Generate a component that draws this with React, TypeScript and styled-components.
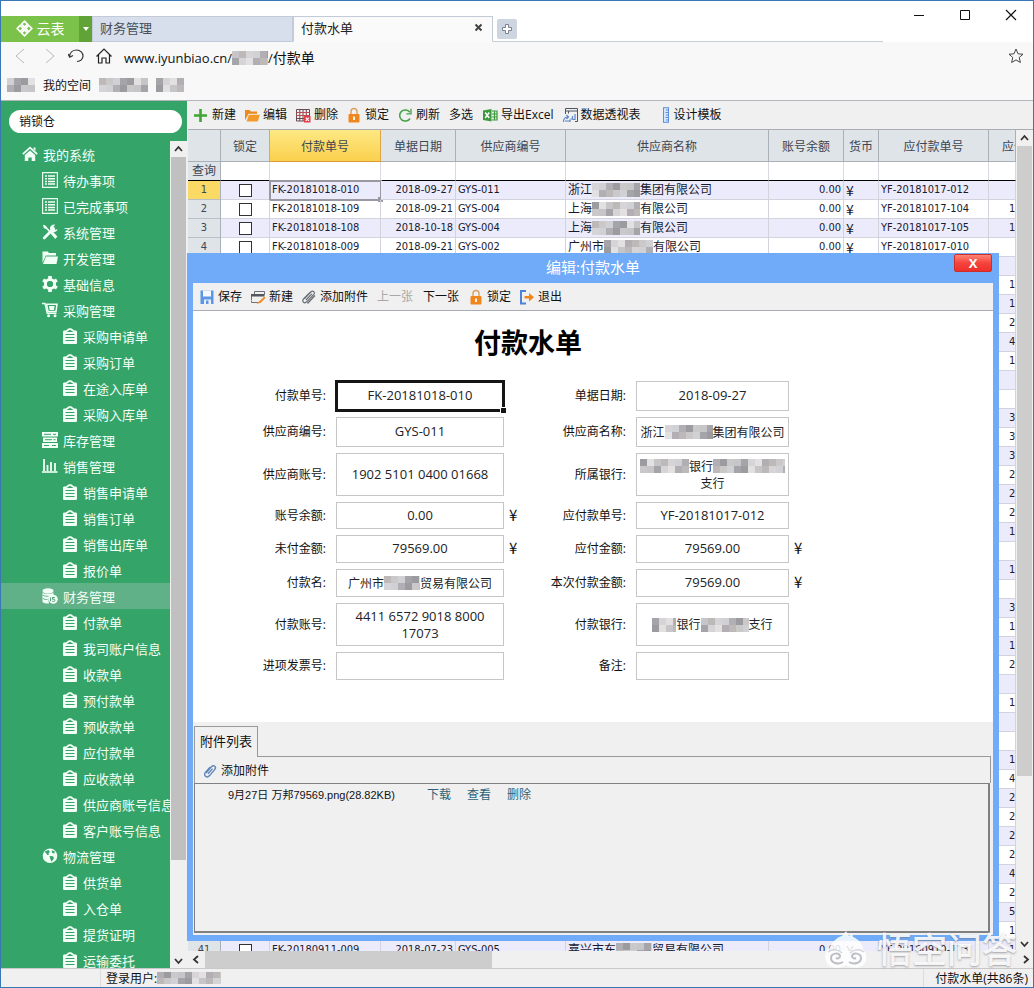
import React from "react";
import styled, { createGlobalStyle, css } from "styled-components";

const GlobalStyle = createGlobalStyle`
  * { box-sizing: border-box; }
  body { margin: 0; background: #fff; }
  body, button, input, textarea, table {
    font-family: "Open Sans", "Noto Sans CJK SC", sans-serif;
    font-size: 12px;
    color: #111;
  }
  button { border: 0; padding: 0; background: none; cursor: pointer; }
  a { text-decoration: none; color: inherit; }
`;

/* ---------- icons ---------- */

const IconSvg = styled.svg`
  flex: none;
`;
const Icon = ({ children }: { children: React.ReactNode }) => (
  <IconSvg width="16" height="16" viewBox="0 0 16 16" fill="none" aria-hidden="true">
    {children}
  </IconSvg>
);

const icons = {
  home: (
    <Icon>
      <path d="M0.8 8.2 8 1.6l7.2 6.6" stroke="#f2fff6" strokeWidth="1.8" />
      <path d="M11.5 1.5h2v3.4l-2-1.8z" fill="#f2fff6" />
      <path d="M2.8 9 8 4.4 13.2 9v6H9.7v-3.6H6.3V15H2.8z" fill="#f2fff6" />
    </Icon>
  ),
  list: (
    <Icon>
      <path d="M.6.6h14.8v14.800H.6z" stroke="#e9fff1" strokeWidth="1.200" />
      <path d="M3 4h2M6 4h7M3 6.7h2M6 6.7h7M3 9.4h2M6 9.4h7M3 12h2M6 12h7" stroke="#f2fff6" strokeWidth="1.5" />
    </Icon>
  ),
  tools: (
    <Icon>
      <path d="M2 1.5 13.6 13.6" stroke="#f2fff6" strokeWidth="1.7" />
      <path d="M1 .8l3 1.2.8 2-1 1-2-1z" fill="#f2fff6" />
      <path d="M9 9.2l1.8-1.6 4.6 4.8-2.2 2.6z" fill="#f2fff6" />
      <path d="M2.2 14 11.6 4.6" stroke="#f2fff6" strokeWidth="2.8" strokeLinecap="round" />
      <path d="M13.2.8a3.8 3.8 0 1 0 2.3 4.4l-2.5.5-1.5-1.4.2-1.8z" fill="#f2fff6" />
    </Icon>
  ),
  folder: (
    <Icon>
      <path d="M.5 13V1.500h5.200l1.300 1.500H14v2.500H3.800z" fill="#f2fff6" />
      <path d="M4 6.500H16l-1.500 7.500H1z" fill="#f2fff6" />
    </Icon>
  ),
  gear: (
    <Icon>
      <circle cx="8" cy="8" r="4.6" stroke="#f2fff6" strokeWidth="3" />
      <path d="M8 0v3M8 13v3M1.1 4l2.6 1.5M12.3 10.5l2.6 1.5M1.1 12l2.6-1.5M12.3 5.5 14.9 4" stroke="#f2fff6" strokeWidth="3.6" />
      <circle cx="8" cy="8" r="2.8" fill="#35a469" />
    </Icon>
  ),
  cart: (
    <Icon>
      <path d="M0 1.5h3l2.2 9.8h9.3" stroke="#f2fff6" strokeWidth="1.4" />
      <path d="M4.6 2.2H15l-1 7.4H6z" stroke="#f2fff6" strokeWidth="1.5" />
      <path d="M7 4h5.6l-.7 4H7.6z" fill="#f2fff6" />
      <circle cx="6.6" cy="13.8" r="1.5" fill="#f2fff6" />
      <circle cx="13" cy="13.8" r="1.5" fill="#f2fff6" />
    </Icon>
  ),
  clipboard: (
    <Icon>
      <path d="M1 4C1 3 1.500 2.500 2.500 2.500h1.300L6.800.2h2.400L12.200 2.500h1.300C14.500 2.500 15 3 15 4V14.500c0 1-.5 1.500-1.500 1.500h-11C1.500 16 1 15.500 1 14.500z" fill="#f2fff6" />
      <path d="M4.500 4h7L8 1.800z" fill="#35a469" />
      <path d="M3.500 6.500h9M3.500 9.500h9M3.500 12.500h9" stroke="#35a469" strokeWidth="1.100" />
    </Icon>
  ),
  stock: (
    <Icon>
      <path d="M0 0h16v4.500H0zM1 5.600h14v4.300H1zM0 11h16v5H0z" fill="#f2fff6" />
      <path d="M2 2.300h7M11 2.300h3M3 7.700h7M11.500 7.700h2M2 13.500h5M10 13.500h4" stroke="#35a469" strokeWidth="1" />
    </Icon>
  ),
  chart: (
    <Icon>
      <path d="M0 14h15.500" stroke="#f2fff6" strokeWidth="1.600" />
      <path d="M2 1v12M5.500 7v6M9 4v9M13 5v8" stroke="#f2fff6" strokeWidth="1.800" />
    </Icon>
  ),
  coins: (
    <Icon>
      <ellipse cx="6" cy="3" rx="5.500" ry="2.700" fill="#f2fff6" />
      <path d="M.5 4.500c2 2 9 2 11 0v3c-3 0-5 2-5 4.500l.5 3.500c-3 .3-6-.5-6.500-1.500z" fill="#f2fff6" />
      <path d="M1 7.200c1.500 1 4 1.200 5.500 1M1 10.500c1.500 1 3 1 4.500 1" stroke="#60b088" />
      <circle cx="11.300" cy="11.300" r="4.500" fill="#f2fff6" />
      <path d="M12.800 9.500h-2.300v1.700c2.300-.4 2.800.6 2.300 1.600-.5.800-1.500.8-2.500.4M8.600 9.500v3.800" stroke="#4a9c70" />
    </Icon>
  ),
  globe: (
    <Icon>
      <circle cx="8" cy="7.800" r="7.300" fill="#f2fff6" />
      <path d="M2.800 3.600 6.500 2l1.500 2-1.600 1.200.8 1.300-1.800.6zM9.600 2.200l3.300 1.300-.6 2-2-.6zM7.500 8l3.500.2 1 2-2.500 3.600-1.200-3z" fill="#35a469" />
    </Icon>
  ),
  plus: (
    <Icon>
      <path d="M7.500 2v13M1 8.500h13" stroke="#3fa535" strokeWidth="2.600" />
    </Icon>
  ),
  openFolder: (
    <Icon>
      <path d="M1 13.500V3h4.500L7 4.500h6v2.300H4.500z" fill="#e9891f" />
      <path d="M4.800 7.800h11l-2 6.700H2.600z" fill="#f39a2b" />
    </Icon>
  ),
  deleteTable: (
    <Icon>
      <path d="M1.500 2.500h13v11.500h-13zM1.500 5.500h13M1.500 8.500h13M1.500 11.500h13M4.800 2.500v11.500M8 2.500v11.500M11.300 2.500v11.500" stroke="#6a4a50" />
      <path d="M1.500 5.500h13M1.500 8.500h13" stroke="#c24a50" />
      <path d="M9 9h6.500v6.500H9z" fill="#e23b45" />
      <path d="M10.700 10.700l3.200 3.200M13.900 10.700l-3.200 3.200" stroke="#fff" strokeWidth="1.200" />
    </Icon>
  ),
  lock: (
    <Icon>
      <path d="M5 8V4.500a3 3 0 0 1 6 0V8" stroke="#d9a066" strokeWidth="1.400" />
      <rect x="2.500" y="7" width="11" height="8.500" rx="1" fill="#f0861c" />
      <path d="M8 9.500v3.500" stroke="#fff" strokeWidth="1.800" />
    </Icon>
  ),
  refresh: (
    <Icon>
      <path d="M12.800 5.200A5.600 5.600 0 1 0 13 11.500" stroke="#43a047" strokeWidth="1.500" />
      <path d="M14 1.800v5H9.400" stroke="#43a047" strokeWidth="1.300" />
    </Icon>
  ),
  excel: (
    <Icon>
      <path d="M1 3.500 9.500 2v12.500L1 13z" fill="#3b9a3b" />
      <path d="M3.200 5.500l4 5.500M7.200 5.500l-4 5.500" stroke="#fff" strokeWidth="1.500" />
      <path d="M10 4h5v9h-5M10 7h5M10 10h5M12.500 4v9" stroke="#3b9a3b" strokeWidth="1.200" />
    </Icon>
  ),
  pivot: (
    <Icon>
      <path d="M3.500 7V1.500h12V14.500H13" stroke="#4e5663" />
      <path d="M3.500 4h12M6.500 4v2.500" stroke="#4e5663" />
      <path d="M1.500 15c0-3 1.500-5 4.500-5M4.500 8 6.500 10l-2 2M3 14h5M8 12.500v2.500M10.500 9v3H8.500M13 7v5.500h-2.500" stroke="#5b86c9" strokeWidth="1.200" />
    </Icon>
  ),
  ruler: (
    <Icon>
      <rect x="8.500" y=".7" width="5" height="14.600" fill="#d7e5fb" stroke="#5e8fdd" />
      <path d="M11 3h2.500M10.500 5.500h3M11 8h2.500M10.500 10.500h3M11 13h2.500" stroke="#5e8fdd" />
    </Icon>
  ),
  save: (
    <Icon>
      <path d="M1.500 1.500h13v13.500H12V10.500H5V15H1.500z" fill="#5b97e6" />
      <path d="M4 1.500h8v6H4z" fill="#f4f8ff" />
      <path d="M7 11.500h2.500V15H7z" fill="#5b97e6" />
    </Icon>
  ),
  newDoc: (
    <Icon>
      <path d="M4.500 5V2.500h10V5M1.500 11.500v-6h13" stroke="#6a6f78" />
      <path d="M1 5h13.500v2.500H1z" fill="#53585f" />
      <path d="M1.500 12v1.500H8" stroke="#6a6f78" />
      <path d="M9 12.500l5.500-5 1 1.500L10.500 14l-4 .8z" fill="#ef8a24" />
    </Icon>
  ),
  clip: (
    <Icon>
      <path d="M3.500 9.500 10 2.800c2-1.800 4.600.6 2.800 2.600l-7 7.400c-2.600 2.400-5.400-.6-3.300-2.800L9 3.500M5 11l5.800-6.200M6.500 14.500l7.500-8" stroke="#666c72" strokeWidth="1.200" />
    </Icon>
  ),
  clipBlue: (
    <Icon>
      <path d="M4 10 9.600 3.600c2.200-2.200 5.200.4 3.200 2.800L7.600 12.600c-2.800 3-6.600-.2-4.200-3.200L8 4.200M6 10.800l4.600-5.200" stroke="#5f86b8" strokeWidth="1.400" />
    </Icon>
  ),
  exit: (
    <Icon>
      <path d="M7 2H2v12.500h5" stroke="#4c83d8" strokeWidth="2" />
      <path d="M5.500 7h4.500V4l5 4.300-5 4.300v-3H5.500z" fill="#f0861c" />
    </Icon>
  ),
};

/* ---------- pixelated privacy block ---------- */

const MosaicSvg = styled.svg`
  flex: none;
  vertical-align: middle;
`;
const greys = ["#d6d4d6", "#b1afb3", "#cbc8ca", "#a5a4a8", "#e2e0e0", "#bdb9b9", "#cfd1d5", "#9c9ca0", "#c6c6c8"];
const Mosaic = ({ w, seed = 0, h = 14 }: { w: number; seed?: number; h?: number }) => {
  const cols = Math.ceil(w / 7);
  const cells = [];
  for (let r = 0; r < 2; r++)
    for (let c = 0; c < cols; c++)
      cells.push(
        <rect key={`${r}-${c}`} x={c * 7} y={(r * h) / 2} width="7" height={h / 2} fill={greys[(c * 5 + r * 4 + seed * 7 + ((c * c) % 4)) % greys.length]} />
      );
  return (
    <MosaicSvg width={w} height={h} aria-hidden="true">
      {cells}
    </MosaicSvg>
  );
};

/* ---------- window frame ---------- */

const Shell = styled.div`
  height: 100vh;
  display: flex;
  flex-direction: column;
  border: 1px solid #3a78b5;
  background: #f8f8f8;
  overflow: hidden;
`;
const TitleBar = styled.header`
  height: 41px;
  flex: none;
  display: flex;
  background: #fff;
`;
const TabStrip = styled.nav`
  flex: 1;
  display: flex;
  align-items: stretch;
  padding-top: 15px;
  box-shadow: inset 0 -1px 0 #c9cdd4;
`;
const LogoButton = styled.button`
  width: 78px;
  display: flex;
  align-items: center;
  justify-content: center;
  gap: 4px;
  padding-bottom: 2px;
  background: #7bc24a;
  color: #fff;
  font-size: 14px;
`;
const LogoMenu = styled.button`
  width: 13px;
  display: flex;
  align-items: center;
  justify-content: center;
  background: #62a337;
`;
const Tab = styled.button<{ $active?: boolean }>`
  width: ${(p) => (p.$active ? 200 : 201)}px;
  display: flex;
  align-items: center;
  justify-content: space-between;
  padding: 0 9px 4px 7px;
  font-size: 13px;
  color: ${(p) => (p.$active ? "#222" : "#4a4f5a")};
  background: ${(p) => (p.$active ? "#fafafa" : "#d6dfeb")};
  border: 1px solid #c3cbd8;
  border-bottom-color: ${(p) => (p.$active ? "#fafafa" : "#c3cbd8")};
`;
const AddTab = styled.button`
  width: 20px;
  height: 20px;
  margin: 3px 0 0 4px;
  border-radius: 2px;
  background: #cdd5e1;
  display: flex;
  align-items: center;
  justify-content: center;
`;
const WindowButtons = styled.div`
  width: 150px;
  display: flex;
  justify-content: flex-end;
  gap: 33px;
  padding: 6px 16px 0 0;
  height: 24px;
`;
const AddressRow = styled.div`
  height: 32px;
  flex: none;
  display: flex;
  align-items: center;
  gap: 12px;
  padding: 0 9px 0 13px;
`;
const Url = styled.div`
  flex: 1;
  display: flex;
  align-items: center;
  font-size: 13px;
  line-height: 20px;
`;
const UrlPage = styled.span`
  font-size: 14px;
`;
const Bookmarks = styled.div`
  height: 26px;
  flex: none;
  display: flex;
  align-items: center;
  gap: 8px;
  padding: 0 6px 4px;
`;
const Body = styled.div`
  flex: 1;
  min-height: 0;
  display: flex;
  border-top: 1px solid #b2b6bb;
`;
const StatusBar = styled.footer`
  height: 19px;
  flex: none;
  display: flex;
  align-items: center;
  justify-content: space-between;
  border-top: 1px solid #c8c8c8;
  background: #f0f0f0;
  line-height: 17px;
`;
const StatusCell = styled.span<{ $left?: boolean }>`
  display: flex;
  align-items: center;
  align-self: stretch;
  border-left: 1px solid #dcdcdc;
  ${(p) => (p.$left ? "margin-left: 99px; padding-left: 5px;" : "padding: 0 5px 0 11px;")}
`;

/* ---------- scrollbars ---------- */

const Bar = styled.div<{ $row?: boolean }>`
  display: flex;
  flex: none;
  flex-direction: ${(p) => (p.$row ? "row" : "column")};
  ${(p) => (p.$row ? "height: 17px;" : "width: 17px;")}
  background: #f0f0f0;
`;
const BarButton = styled.button`
  width: 16px;
  height: 16px;
  flex: none;
  display: flex;
  align-items: center;
  justify-content: center;
`;
const Thumb = styled.div<{ $grow: number; $tone?: string }>`
  flex: ${(p) => p.$grow};
  margin: 0 1px;
  background: ${(p) => p.$tone || "#cdcdcd"};
`;
const Rest = styled.div<{ $grow: number }>`
  flex: ${(p) => p.$grow};
`;
const arrows = { up: "M1 6l3.500-4 3.500 4", down: "M1 3l3.500 4 3.500-4", left: "M6 1 2 4.500 6 8", right: "M3 1l4 3.500L3 8" };
const Arrow = ({ dir }: { dir: keyof typeof arrows }) => (
  <svg width="9" height="9" fill="none" aria-hidden="true">
    <path d={arrows[dir]} stroke="#333" strokeWidth="1.800" />
  </svg>
);
type BarProps = { thumb: number; rest: number; row?: boolean; tone?: string };
const ScrollBar = ({ thumb, rest, row, tone }: BarProps) => (
  <Bar $row={row}>
    <BarButton aria-label={row ? "向左" : "向上"}><Arrow dir={row ? "left" : "up"} /></BarButton>
    <Thumb $grow={thumb} $tone={tone} />
    <Rest $grow={rest} />
    <BarButton aria-label={row ? "向右" : "向下"}><Arrow dir={row ? "right" : "down"} /></BarButton>
  </Bar>
);

/* ---------- sidebar ---------- */

const Sidebar = styled.aside`
  width: 186px;
  flex: none;
  display: flex;
  flex-direction: column;
  background: #35a469;
`;
const Search = styled.input`
  height: 23px;
  flex: none;
  margin: 9px 5px 8px 8px;
  padding: 0 10px 2px;
  border: 0;
  border-radius: 12px;
  background: #fff;
  outline: 0;
`;
const TreeArea = styled.div`
  flex: 1;
  min-height: 0;
  display: flex;
`;
const Tree = styled.ul`
  flex: 1;
  min-width: 0;
  margin: 0;
  padding: 0;
  list-style: none;
  overflow: hidden;
`;
const TreeLink = styled.a<{ $level: number; $active?: boolean }>`
  height: 26px;
  display: flex;
  align-items: center;
  gap: 5px;
  padding-left: ${(p) => 21 + p.$level * 20}px;
  white-space: nowrap;
  font-size: 13px;
  color: #f4fff8;
  background: ${(p) => (p.$active ? "#60b088" : "transparent")};
`;

const tree: [number, keyof typeof icons, string][] = [
  [0, "home", "我的系统"], [1, "list", "待办事项"], [1, "list", "已完成事项"], [1, "tools", "系统管理"],
  [1, "folder", "开发管理"], [1, "gear", "基础信息"], [1, "cart", "采购管理"], [2, "clipboard", "采购申请单"],
  [2, "clipboard", "采购订单"], [2, "clipboard", "在途入库单"], [2, "clipboard", "采购入库单"], [1, "stock", "库存管理"],
  [1, "chart", "销售管理"], [2, "clipboard", "销售申请单"], [2, "clipboard", "销售订单"], [2, "clipboard", "销售出库单"],
  [2, "clipboard", "报价单"], [1, "coins", "财务管理"], [2, "clipboard", "付款单"], [2, "clipboard", "我司账户信息"],
  [2, "clipboard", "收款单"], [2, "clipboard", "预付款单"], [2, "clipboard", "预收款单"], [2, "clipboard", "应付款单"],
  [2, "clipboard", "应收款单"], [2, "clipboard", "供应商账号信息"], [2, "clipboard", "客户账号信息"], [1, "globe", "物流管理"],
  [2, "clipboard", "供货单"], [2, "clipboard", "入仓单"], [2, "clipboard", "提货证明"], [2, "clipboard", "运输委托"],
];

/* ---------- toolbar ---------- */

const Toolbar = styled.div<{ $dialog?: boolean }>`
  height: ${(p) => (p.$dialog ? 28 : 29)}px;
  flex: none;
  display: flex;
  align-items: center;
  gap: 8px;
  padding: 0 ${(p) => (p.$dialog ? 6 : 5)}px;
  background: #f0f0f0;
  border-bottom: 1px solid #a9adb3;
  white-space: nowrap;
`;
const ToolButton = styled.button<{ $plain?: boolean; $spaced?: boolean }>`
  display: flex;
  align-items: center;
  gap: 3px;
  line-height: 20px;
  ${(p) => p.$plain && "padding: 0 1px;"}
  ${(p) => p.$spaced && "margin-left: 6px;"}
  &:disabled { color: #a8a8a8; }
`;

/* ---------- data grid ---------- */

const Main = styled.main`
  position: relative;
  flex: 1;
  min-width: 0;
  display: flex;
  flex-direction: column;
  padding-left: 1px;
  background: #f0f0f0;
`;
const GridArea = styled.div`
  flex: 1;
  min-height: 0;
  display: flex;
`;
const GridClip = styled.div`
  flex: 1;
  min-width: 0;
  overflow: hidden;
  background: #fff;
`;
const Grid = styled.table`
  width: 100%;
  table-layout: fixed;
  border-collapse: separate;
  border-spacing: 0;
  font-family: "DejaVu Sans Condensed", "Noto Sans CJK SC", sans-serif;
  font-size: 11px;
`;
const Head = styled.th<{ $on?: boolean }>`
  height: 32px;
  padding: 0;
  overflow: hidden;
  white-space: nowrap;
  font-size: 12px;
  font-weight: 400;
  color: #3d4652;
  background: ${(p) => (p.$on ? "linear-gradient(#fde884, #fbd04d)" : "#dfe4e8")};
  border-right: 1px solid ${(p) => (p.$on ? "#e0a64a" : "#a9b0b8")};
  border-bottom: 1px solid ${(p) => (p.$on ? "#d9983a" : "#a9b0b8")};
  &:last-child { padding-left: 13px; text-align: left; }
`;
const FilterCell = styled.td`
  height: 19px;
  padding: 0;
  border-right: 1px solid #d8dadf;
  border-bottom: 1px solid #000;
`;
const RowHead = styled.th<{ $on?: boolean; $filter?: boolean }>`
  height: 19px;
  padding: 0;
  font-weight: 400;
  line-height: 16px;
  color: #3d4652;
  background: ${(p) => (p.$on ? "#fbd965" : "#dfe4e8")};
  border-right: 1px solid #a9b0b8;
  border-bottom: 1px solid ${(p) => (p.$filter ? "#000" : "#b9bfc6")};
  ${(p) => p.$filter && "font-size: 12px;"}
`;
const Cell = styled.td<{ $align?: string }>`
  position: relative;
  height: 19px;
  padding: 0 2px;
  line-height: 16px;
  white-space: nowrap;
  text-align: ${(p) => p.$align || "left"};
  color: #1a1a2e;
  border-right: 1px solid #d3d3de;
  border-bottom: 1px solid #d3d3de;
  &:last-child { padding-left: 20px; overflow: hidden; }
`;
const GridRow = styled.tr`
  &:nth-child(odd) ${Cell} { background: #ecebfb; }
`;
const SupplierName = styled.span`
  display: flex;
  align-items: center;
  font-size: 12px;
  height: 16px;
`;
const Yuan = styled.span`
  display: block;
  line-height: 16px;
  font-family: "Noto Sans CJK SC", sans-serif;
  font-size: 14px;
`;
const Tick = styled.input`
  appearance: none;
  display: block;
  width: 13px;
  height: 13px;
  margin: 0 auto;
  border: 1px solid #333;
  background: #fff;
`;
const CellCursor = styled.span`
  position: absolute;
  inset: -1px -2px -2px -1px;
  border: 2px solid #9a99a3;
  &::after {
    content: "";
    position: absolute;
    right: -3px;
    bottom: -3px;
    width: 5px;
    height: 5px;
    background: #9a99a3;
  }
`;

type Row = { no: string; date: string; sup: string; name: React.ReactNode; due: string };
const records: Record<number, Row> = {
  1: { no: "FK-20181018-010", date: "2018-09-27", sup: "GYS-011", name: <>浙江<Mosaic w={48} />集团有限公司</>, due: "YF-20181017-012" },
  2: { no: "FK-20181018-109", date: "2018-09-21", sup: "GYS-004", name: <>上海<Mosaic w={48} seed={1} />有限公司</>, due: "YF-20181017-104" },
  3: { no: "FK-20181018-108", date: "2018-10-18", sup: "GYS-004", name: <>上海<Mosaic w={48} seed={2} />有限公司</>, due: "YF-20181017-105" },
  4: { no: "FK-20181018-009", date: "2018-09-21", sup: "GYS-002", name: <>广州市<Mosaic w={49} seed={3} />有限公司</>, due: "YF-20181017-010" },
  41: { no: "FK-20180911-009", date: "2018-07-23", sup: "GYS-005", name: <>嘉兴市东<Mosaic w={36} seed={4} />贸易有限公司</>, due: "YF-20180910-113" },
};
const amounts = ["", "1", "1", "", "", "1", "1", "2", "4", "1", "", "", "3", "3", "3", "2", "2", "2", "1", "", "1", "", "3", "1", "1", "2", "", "1", "", "", "1", "4", "2", "2", "2", "2", "4", "2", "5", "1", "1"];
const heads = ["", "锁定", "付款单号", "单据日期", "供应商编号", "供应商名称", "账号余额", "货币", "应付款单号", "应付"];
const widths = [33, 49, 111, 75, 110, 203, 75, 35, 110];

/* ---------- edit dialog ---------- */

const Dialog = styled.section`
  position: absolute;
  left: 0;
  right: 34px;
  top: 152px;
  bottom: 27px;
  display: flex;
  flex-direction: column;
  padding: 0 6px 6px;
  background: #6fabf8;
`;
const DialogTitle = styled.div`
  position: relative;
  height: 30px;
  flex: none;
  text-align: center;
  font-size: 15px;
  line-height: 28px;
  color: #fff;
`;
const CloseButton = styled.button`
  position: absolute;
  right: 1px;
  top: 1px;
  width: 38px;
  height: 18px;
  border: 1px solid #c9302c;
  border-radius: 2px;
  background: linear-gradient(#ff8474, #f5433c 50%, #ee2f2c);
  color: #fff;
  font-weight: 700;
  font-size: 13px;
  line-height: 14px;
`;
const Form = styled.form`
  flex: 1;
  background: #fff;
`;
const Sheet = styled.div`
  width: 670px;
  max-width: 100%;
  padding-top: 14px;
`;
const SheetTitle = styled.h1`
  margin: 0 0 20px;
  text-align: center;
  font-size: 27px;
  line-height: 36px;
  font-weight: 700;
  color: #000;
`;
const Fields = styled.div`
  display: grid;
  grid-template-columns: 143px 168px 24px 108px 153px 1fr;
  grid-template-rows: 30px 30px 43px 27px 28px 28px 43px 28px;
  row-gap: 6px;
  align-items: center;
`;
const Label = styled.label`
  padding: 0 10px 2px 0;
  text-align: right;
  white-space: nowrap;
`;
const boxStyle = css`
  width: 100%;
  height: 100%;
  border: 1px solid #c6c6c6;
  border-radius: 0;
  background: #fff;
  text-align: center;
  font-size: 13px;
  color: #222;
  outline: 0;
`;
const Box = styled.input`
  ${boxStyle}
  padding: 0 4px 2px;
`;
const MultiBox = styled.textarea`
  ${boxStyle}
  display: block;
  resize: none;
  overflow: hidden;
  padding: 4px 8px;
  line-height: 17px;
`;
const MaskedBox = styled.output`
  ${boxStyle}
  display: flex;
  flex-wrap: wrap;
  align-content: center;
  align-items: center;
  justify-content: center;
  font-size: 12px;
  line-height: 17px;
`;
const Selected = styled.div`
  position: relative;
  height: 100%;
  outline: 3px solid #151515;
  outline-offset: -2px;
  &::after {
    content: "";
    position: absolute;
    right: -2px;
    bottom: -2px;
    width: 5px;
    height: 5px;
    background: #151515;
    outline: 1px solid #fff;
  }
`;
const Unit = styled(Yuan)`
  padding: 0 0 2px 5px;
  font-size: 15px;
`;
const Attachments = styled.section`
  height: 213px;
  flex: none;
  display: flex;
  flex-direction: column;
  padding: 4px 2px 2px 1px;
  background: #f0f0f0;
`;
const AttachTabs = styled.div`
  display: flex;
  height: 31px;
  flex: none;
`;
const AttachTab = styled.button`
  width: 64px;
  padding-bottom: 4px;
  font-size: 13px;
  white-space: nowrap;
  border: 1px solid #999;
  border-bottom: 0;
`;
const TabRule = styled.div`
  flex: 1;
  border-bottom: 1px solid #999;
`;
const AttachTools = styled.div`
  height: 26px;
  flex: none;
  display: flex;
  align-items: center;
  padding: 2px 0 0 7px;
  border: solid #999;
  border-width: 0 1px;
`;
const FileList = styled.ul`
  flex: 1;
  margin: 0 1px 0 0;
  padding: 0 0 0 33px;
  list-style: none;
  border: 1px solid #808080;
  border-right-width: 2px;
  border-bottom-width: 2px;
`;
const FileItem = styled.li`
  display: flex;
  align-items: center;
  gap: 16px;
  height: 20px;
`;
const FileName = styled.span`
  width: 183px;
  white-space: nowrap;
  font-family: "Liberation Sans", "Noto Sans CJK SC", sans-serif;
  font-size: 11px;
`;
const FileLink = styled.a`
  color: #2c6378;
`;
const Watermark = styled.div`
  position: absolute;
  right: 16px;
  bottom: 0;
  display: flex;
  align-items: center;
  gap: 10px;
  font-size: 35px;
  font-weight: 500;
  line-height: 36px;
  height: 36px;
  white-space: nowrap;
  color: rgba(255, 255, 255, 0.9);
  text-shadow: 0 1px 2px rgba(110, 110, 120, 0.6);
  pointer-events: none;
`;

export default function App() {
  return (
    <>
      <GlobalStyle />
      <Shell>
        <TitleBar>
          <TabStrip>
            <LogoButton>
              <svg width="17" height="17" viewBox="0 0 17 17" fill="none" stroke="#fff" strokeWidth="1.700" aria-hidden="true">
                <path d="M8.500 1.200 11.500 4.200 8.500 7.200 5.500 4.200zM8.500 9.800l3 3-3 3-3-3zM4.200 5.500l3 3-3 3-3-3zM12.800 5.500l3 3-3 3-3-3z" />
              </svg>
              云表
            </LogoButton>
            <LogoMenu aria-label="菜单">
              <svg width="6" height="4"><path d="M0 0h6L3 4z" fill="#fff" /></svg>
            </LogoMenu>
            <Tab>财务管理</Tab>
            <Tab $active>
              付款水单
              <svg width="9" height="9" aria-hidden="true"><path d="M1.500 1.500l6 6M7.500 1.500l-6 6" stroke="#444" strokeWidth="2" /></svg>
            </Tab>
            <AddTab aria-label="新标签">
              <svg width="12" height="12" fill="#fff" aria-hidden="true"><path d="M4.500 1.500h3v3h3v3h-3v3h-3v-3h-3v-3h3z" stroke="#7c8492" /></svg>
            </AddTab>
          </TabStrip>
          <WindowButtons>
            <button aria-label="最小化"><svg width="12" height="12"><path d="M1 6.500h10" stroke="#111" /></svg></button>
            <button aria-label="最大化"><svg width="14" height="12"><path d="M2.500 1.500h9v9h-9z" fill="none" stroke="#111" /></svg></button>
            <button aria-label="关闭"><svg width="12" height="12"><path d="M1 1l10 10M11 1 1 11" stroke="#111" strokeWidth="1.200" /></svg></button>
          </WindowButtons>
        </TitleBar>
        <AddressRow>
          <button aria-label="后退"><svg width="12" height="16" fill="none"><path d="M10 1 2 8l8 7" stroke="#b9b9b9" /></svg></button>
          <button aria-label="前进"><svg width="18" height="16" fill="none"><path d="M8 1l8 7-8 7" stroke="#b9b9b9" /></svg></button>
          <button aria-label="刷新">
            <svg width="16" height="16" fill="none" stroke="#333" strokeWidth="1.200"><path d="M1.500 8.500C2 4.500 5 2 8.500 2c4 0 6.500 3 6.500 6s-2.500 5.500-6 5.500M0 6l1.800 3.200L5 7.500" /></svg>
          </button>
          <button aria-label="主页">
            <svg width="16" height="16" fill="none" stroke="#222" strokeWidth="1.200"><path d="M.5 8.500 8 1l7.500 7.500M2.500 7v8h3.500V10h4v5h3.500V7" /></svg>
          </button>
          <Url>
            www.iyunbiao.cn/<Mosaic w={36} seed={5} />/<UrlPage>付款单</UrlPage>
          </Url>
          <button aria-label="收藏">
            <svg width="16" height="16" fill="none" stroke="#444"><path d="M8 1l2 4.800 5 .4-3.800 3.300 1.200 5L8 11.900l-4.400 2.600 1.200-5L1 6.200l5-.4z" /></svg>
          </button>
        </AddressRow>
        <Bookmarks>
          <Mosaic w={28} seed={6} />
          <a href="#space">我的空间</a>
          <Mosaic w={49} seed={2} />
          <Mosaic w={28} seed={3} />
        </Bookmarks>
        <Body>
          <Sidebar>
            <Search aria-label="搜索" defaultValue="销锁仓" />
            <TreeArea>
              <Tree>
                {tree.map(([level, icon, text], i) => (
                  <li key={i}>
                    <TreeLink href="#menu" $level={level} $active={icon === "coins"}>
                      {icons[icon]}
                      {text}
                    </TreeLink>
                  </li>
                ))}
              </Tree>
              <ScrollBar thumb={702} rest={92} tone="#c0c0c0" />
            </TreeArea>
          </Sidebar>
          <Main>
            <Toolbar>
              <ToolButton>{icons.plus}新建</ToolButton>
              <ToolButton>{icons.openFolder}编辑</ToolButton>
              <ToolButton>{icons.deleteTable}删除</ToolButton>
              <ToolButton>{icons.lock}锁定</ToolButton>
              <ToolButton>{icons.refresh}刷新</ToolButton>
              <ToolButton $plain>多选</ToolButton>
              <ToolButton>{icons.excel}导出Excel</ToolButton>
              <ToolButton>{icons.pivot}数据透视表</ToolButton>
              <ToolButton $spaced>{icons.ruler}设计模板</ToolButton>
            </Toolbar>
            <GridArea>
              <GridClip>
                <Grid>
                  <colgroup>
                    {widths.map((w, i) => <col key={i} width={w} />)}
                    <col />
                  </colgroup>
                  <thead>
                    <tr>{heads.map((h, i) => <Head key={i} $on={i === 2}>{h}</Head>)}</tr>
                    <tr>
                      <RowHead $filter>查询</RowHead>
                      {heads.slice(1).map((_, i) => <FilterCell key={i} />)}
                    </tr>
                  </thead>
                  <tbody>
                    {amounts.map((amount, i) => {
                      const n = i + 1;
                      const r = records[n];
                      return (
                        <GridRow key={n}>
                          <RowHead $on={n === 1}>{r && n}</RowHead>
                          <Cell>{r && <Tick type="checkbox" aria-label={`锁定 ${r.no}`} />}</Cell>
                          <Cell>{r?.no}{n === 1 && <CellCursor />}</Cell>
                          <Cell $align="right">{r?.date}</Cell>
                          <Cell>{r?.sup}</Cell>
                          <Cell>{r && <SupplierName>{r.name}</SupplierName>}</Cell>
                          <Cell $align="right">{r && "0.00"}</Cell>
                          <Cell>{r && <Yuan>¥</Yuan>}</Cell>
                          <Cell>{r?.due}</Cell>
                          <Cell>{amount}</Cell>
                        </GridRow>
                      );
                    })}
                  </tbody>
                </Grid>
              </GridClip>
              <ScrollBar thumb={629} rest={159} />
            </GridArea>
            <ScrollBar row thumb={288} rest={525} />

            <Dialog role="dialog" aria-label="编辑:付款水单">
              <DialogTitle>
                编辑:付款水单
                <CloseButton>X</CloseButton>
              </DialogTitle>
              <Toolbar $dialog>
                <ToolButton>{icons.save}保存</ToolButton>
                <ToolButton>{icons.newDoc}新建</ToolButton>
                <ToolButton>{icons.clip}添加附件</ToolButton>
                <ToolButton $plain disabled>上一张</ToolButton>
                <ToolButton $plain>下一张</ToolButton>
                <ToolButton>{icons.lock}锁定</ToolButton>
                <ToolButton>{icons.exit}退出</ToolButton>
              </Toolbar>
              <Form>
                <Sheet>
                  <SheetTitle>付款水单</SheetTitle>
                  <Fields>
                    <Label htmlFor="no">付款单号:</Label>
                    <Selected><Box id="no" defaultValue="FK-20181018-010" /></Selected>
                    <span />
                    <Label htmlFor="date">单据日期:</Label>
                    <Box id="date" defaultValue="2018-09-27" />
                    <span />

                    <Label htmlFor="sup">供应商编号:</Label>
                    <Box id="sup" defaultValue="GYS-011" />
                    <span />
                    <Label htmlFor="supname">供应商名称:</Label>
                    <MaskedBox id="supname">浙江<Mosaic w={48} />集团有限公司</MaskedBox>
                    <span />

                    <Label htmlFor="supacc">供应商账号:</Label>
                    <Box id="supacc" defaultValue="1902 5101 0400 01668" />
                    <span />
                    <Label htmlFor="bank">所属银行:</Label>
                    <MaskedBox id="bank"><Mosaic w={49} seed={1} />银行<Mosaic w={72} seed={4} />支行</MaskedBox>
                    <span />

                    <Label htmlFor="balance">账号余额:</Label>
                    <Box id="balance" defaultValue="0.00" />
                    <Unit>¥</Unit>
                    <Label htmlFor="due">应付款单号:</Label>
                    <Box id="due" defaultValue="YF-20181017-012" />
                    <span />

                    <Label htmlFor="unpaid">未付金额:</Label>
                    <Box id="unpaid" defaultValue="79569.00" />
                    <Unit>¥</Unit>
                    <Label htmlFor="payable">应付金额:</Label>
                    <Box id="payable" defaultValue="79569.00" />
                    <Unit>¥</Unit>

                    <Label htmlFor="payer">付款名:</Label>
                    <MaskedBox id="payer">广州市<Mosaic w={36} seed={2} />贸易有限公司</MaskedBox>
                    <span />
                    <Label htmlFor="current">本次付款金额:</Label>
                    <Box id="current" defaultValue="79569.00" />
                    <Unit>¥</Unit>

                    <Label htmlFor="payacc">付款账号:</Label>
                    <MultiBox id="payacc" defaultValue="4411 6572 9018 8000 17073" />
                    <span />
                    <Label htmlFor="paybank">付款银行:</Label>
                    <MaskedBox id="paybank"><Mosaic w={24} seed={3} />银行<Mosaic w={48} seed={5} />支行</MaskedBox>
                    <span />

                    <Label htmlFor="invoice">进项发票号:</Label>
                    <Box id="invoice" />
                    <span />
                    <Label htmlFor="remark">备注:</Label>
                    <Box id="remark" />
                    <span />
                  </Fields>
                </Sheet>
              </Form>
              <Attachments>
                <AttachTabs>
                  <AttachTab>附件列表</AttachTab>
                  <TabRule />
                </AttachTabs>
                <AttachTools>
                  <ToolButton>{icons.clipBlue}添加附件</ToolButton>
                </AttachTools>
                <FileList>
                  <FileItem>
                    <FileName>9月27日 万邦79569.png(28.82KB)</FileName>
                    <FileLink href="#download">下载</FileLink>
                    <FileLink href="#view">查看</FileLink>
                    <FileLink href="#delete">删除</FileLink>
                  </FileItem>
                </FileList>
              </Attachments>
            </Dialog>
            <Watermark>
              <svg width="42" height="38" viewBox="0 0 42 38" fill="none" aria-hidden="true">
                <path d="M4 18C7 10 13 6 17 5l4-5 3 5 3-3 1 4c5 2 9 6 10 12 4 4 5 13-1 17-5 3-11 2-16-1-4 3-11 4-16 1-6-4-6-13-2-17z" fill="#fff" fillOpacity=".85" />
                <path d="M3 21c4-3 10-3 14 1M39 21c-4-3-10-3-14 1" stroke="#d3d5da" strokeWidth="1.500" />
                <path d="M18 31c-5 3-12 1-12-4 0-5 8-6 9-2 0 2-2 3-4 2M24 31c5 3 12 1 12-4 0-5-8-6-9-2 0 2 2 3 4 2" stroke="#bcbfc6" strokeWidth="2" />
              </svg>
              悟空问答
            </Watermark>
          </Main>
        </Body>
        <StatusBar>
          <StatusCell $left>登录用户:<Mosaic w={64} seed={4} h={12} /></StatusCell>
          <StatusCell>付款水单(共86条)</StatusCell>
        </StatusBar>
      </Shell>
    </>
  );
}
